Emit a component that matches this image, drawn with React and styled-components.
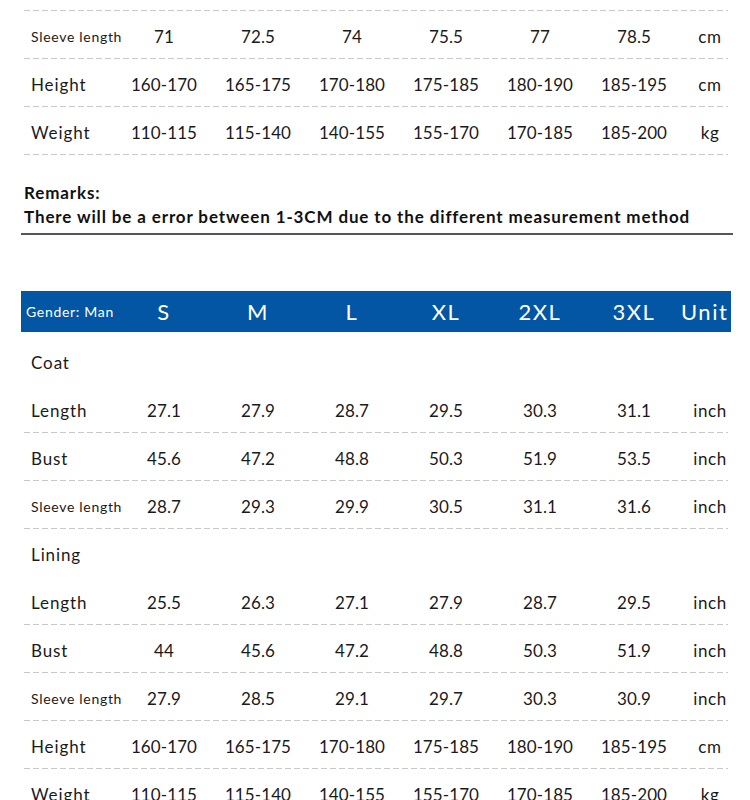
import React from 'react';
import styled, {createGlobalStyle} from 'styled-components';

const GlobalStyle = createGlobalStyle`
  body {
    margin: 0;
    background: #fff;
    font-family: Lato, "Open Sans", sans-serif;
    color: #1a1a1a;
  }
`;

const COLS = '96px repeat(6, 94px) 50px';

const Page = styled.div`
  width: 710px;
  padding: 10px 0 0 21px;
`;

const Dash = styled.div`
  height: 1px;
  margin: 0 3px;
  background: repeating-linear-gradient(to right, #c8c8c8 0 6px, transparent 6px 9px);
`;

const Row = styled.div`
  display: grid;
  grid-template-columns: ${COLS};
  align-items: center;
  height: ${p => p.$tall ? 53 : p.$group ? 48 : 47}px;
  padding-top: ${p => p.$tall ? 5 : 0}px;
  box-sizing: border-box;
  font-size: 17px;
`;

const Label = styled.div`
  padding-left: 10px;
  padding-top: 3px;
  font-size: ${p => p.$small ? 14 : 17}px;
  letter-spacing: ${p => p.$small ? 0.7 : 0.9}px;
  white-space: nowrap;
`;

const Cell = styled.div`
  text-align: center;
  padding-top: 3px;
  letter-spacing: 0.1px;
`;

const Unit = styled.div`
  text-align: center;
  padding: 3px 0 0 8px;
  letter-spacing: 0.6px;
`;

const Remarks = styled.div`
  padding: 26px 0 4px 3px;
  font-weight: 700;
  font-size: 17px;
  letter-spacing: 0.87px;
  line-height: 24px;
  color: #111;
  border-bottom: 2px solid #555;
  margin-right: -2px;
`;

const Header = styled.div`
  display: grid;
  grid-template-columns: ${COLS};
  align-items: center;
  height: 41px;
  margin-top: 56px;
  background: #0256a4;
  color: #fff;
`;

const HeadLabel = styled.div`
  padding-left: 5px;
  font-size: 14px;
  letter-spacing: 0.7px;
  white-space: nowrap;
`;

const HeadSize = styled.div`
  text-align: center;
  font-size: 22px;
  letter-spacing: 1.5px;
  padding-right: ${p => p.$unit ? 8 : 0}px;
`;

const SIZES = ['S', 'M', 'L', 'XL', '2XL', '3XL'];

const DataRow = ({label, values, unit, small, dash = true}) => (
  <>
    <Row>
      <Label $small={small}>{label}</Label>
      {values.map((v, i) => <Cell key={i}>{v}</Cell>)}
      <Unit>{unit}</Unit>
    </Row>
    {dash && <Dash />}
  </>
);

const GroupRow = ({label, tall}) => (
  <Row $group $tall={tall}>
    <Label>{label}</Label>
  </Row>
);

const App = () => (
  <Page>
    <GlobalStyle />
    <Dash />
    <DataRow small label="Sleeve length" values={['71', '72.5', '74', '75.5', '77', '78.5']} unit="cm" />
    <DataRow label="Height" values={['160-170', '165-175', '170-180', '175-185', '180-190', '185-195']} unit="cm" />
    <DataRow label="Weight" values={['110-115', '115-140', '140-155', '155-170', '170-185', '185-200']} unit="kg" />

    <Remarks>
      Remarks:<br />
      There will be a error between 1-3CM due to the different measurement method
    </Remarks>

    <Header>
      <HeadLabel>Gender: Man</HeadLabel>
      {SIZES.map(s => <HeadSize key={s}>{s}</HeadSize>)}
      <HeadSize $unit>Unit</HeadSize>
    </Header>

    <GroupRow tall label="Coat" />
    <DataRow label="Length" values={['27.1', '27.9', '28.7', '29.5', '30.3', '31.1']} unit="inch" />
    <DataRow label="Bust" values={['45.6', '47.2', '48.8', '50.3', '51.9', '53.5']} unit="inch" />
    <DataRow small label="Sleeve length" values={['28.7', '29.3', '29.9', '30.5', '31.1', '31.6']} unit="inch" />
    <GroupRow label="Lining" />
    <DataRow label="Length" values={['25.5', '26.3', '27.1', '27.9', '28.7', '29.5']} unit="inch" />
    <DataRow label="Bust" values={['44', '45.6', '47.2', '48.8', '50.3', '51.9']} unit="inch" />
    <DataRow small label="Sleeve length" values={['27.9', '28.5', '29.1', '29.7', '30.3', '30.9']} unit="inch" />
    <DataRow label="Height" values={['160-170', '165-175', '170-180', '175-185', '180-190', '185-195']} unit="cm" />
    <DataRow label="Weight" values={['110-115', '115-140', '140-155', '155-170', '170-185', '185-200']} unit="kg" />
  </Page>
);

export default App;
